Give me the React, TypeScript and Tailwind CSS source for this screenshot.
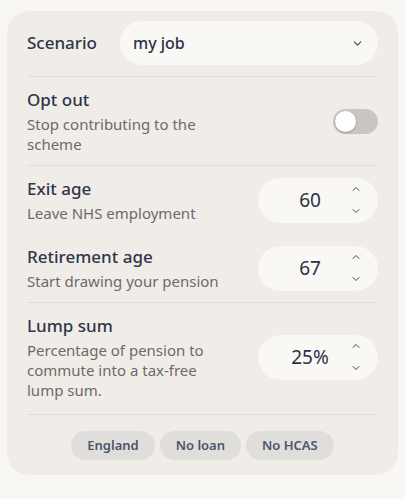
import { ChevronDown, ChevronUp } from 'lucide-react';

function NumberField({ value }: { value: string }) {
  return (
    <div className="w-[120px] h-[45px] shrink-0 rounded-full bg-[#f9f8f5] flex items-center pl-3 pr-4">
      <span className="flex-1 text-center text-[19px] text-[#2c3147]">{value}</span>
      <div className="flex flex-col items-center gap-[10px] text-[#3f445a]">
        <ChevronUp className="w-[12px] h-[12px]" strokeWidth={2} />
        <ChevronDown className="w-[12px] h-[12px]" strokeWidth={2} />
      </div>
    </div>
  );
}

function Row({ title, desc, children, className = '' }: { title: string; desc: string; children: React.ReactNode; className?: string }) {
  return (
    <div className={`flex items-center justify-between gap-4 py-[11px] ${className}`}>
      <div className="max-w-[200px]">
        <p className="text-[17px] leading-6 font-medium text-[#30354a]">{title}</p>
        <p className="mt-0.5 text-[15px] leading-5 text-[#6d6a68]">{desc}</p>
      </div>
      {children}
    </div>
  );
}

export default function App() {
  return (
    <div className="min-h-[499px] bg-[#f8f7f4] pt-[11px] px-[7px]" style={{ fontFamily: '"Noto Sans", sans-serif' }}>
      <div className="bg-[#f0ede9] rounded-[22px] px-5 pt-[10px]">
        <div className="flex items-center justify-between pb-[11px] border-b border-[#e1ddd8]">
          <span className="text-[17px] font-medium text-[#30354a]">Scenario</span>
          <div className="w-[258px] h-[44px] rounded-full bg-[#f9f8f5] flex items-center justify-between pl-[13px] pr-[14px]">
            <span className="text-[16px] font-medium text-[#2c3147]">my job</span>
            <ChevronDown className="w-[13px] h-[13px] text-[#3f445a]" strokeWidth={2} />
          </div>
        </div>

        <div className="border-b border-[#e1ddd8]">
          <Row title="Opt out" desc="Stop contributing to the scheme">
            <div className="w-[45px] h-[25px] rounded-full bg-[#c9c6c1] p-[2px] flex items-center">
              <div className="w-[21px] h-[21px] rounded-full bg-white shadow-[0_1px_2px_rgba(0,0,0,0.25)]" />
            </div>
          </Row>
        </div>

        <div className="border-b border-[#e1ddd8]">
          <Row title="Exit age" desc="Leave NHS employment">
            <NumberField value="60" />
          </Row>
          <Row title="Retirement age" desc="Start drawing your pension">
            <NumberField value="67" />
          </Row>
        </div>

        <div className="border-b border-[#e1ddd8]">
          <Row title="Lump sum" desc="Percentage of pension to commute into a tax-free lump sum." className="pb-[14px]">
            <NumberField value="25%" />
          </Row>
        </div>

        <div className="flex justify-center gap-[5px] pt-4 pb-[15px]">
          {['England', 'No loan', 'No HCAS'].map((c) => (
            <span key={c} className="h-[29px] px-[16px] rounded-full bg-[#e0dedb] text-[13px] font-semibold text-[#4d5370] flex items-center">
              {c}
            </span>
          ))}
        </div>
      </div>
    </div>
  );
}
